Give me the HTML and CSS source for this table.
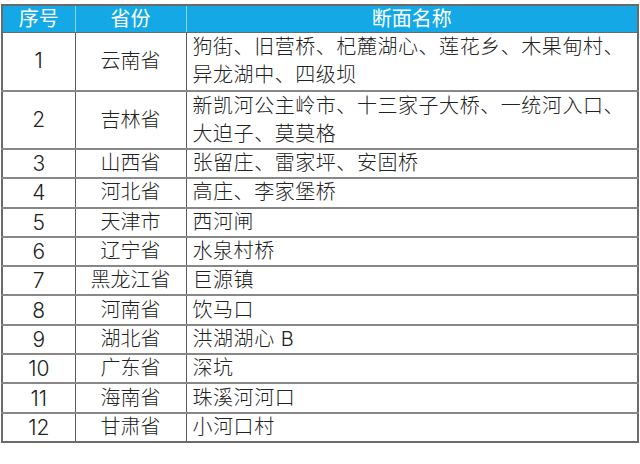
FILE: index.html
```html
<!DOCTYPE html>
<html lang="zh">
<head>
<meta charset="utf-8">
<link rel="stylesheet" href="styles.css">
</head>
<body>
<table class="sections">
  <colgroup>
    <col class="c-no">
    <col class="c-prov">
    <col class="c-name">
  </colgroup>
  <thead>
    <tr class="head"><th>序号</th><th>省份</th><th>断面名称</th></tr>
  </thead>
  <tbody>
    <tr class="tall"><td class="num">1</td><td class="prov">云南省</td><td class="name">狗街、旧营桥、杞麓湖心、莲花乡、木果甸村、<br>异龙湖中、四级坝</td></tr>
    <tr class="tall"><td class="num">2</td><td class="prov">吉林省</td><td class="name">新凯河公主岭市、十三家子大桥、一统河入口、<br>大迫子、莫莫格</td></tr>
    <tr><td class="num">3</td><td class="prov">山西省</td><td class="name">张留庄、雷家坪、安固桥</td></tr>
    <tr><td class="num">4</td><td class="prov">河北省</td><td class="name">高庄、李家堡桥</td></tr>
    <tr><td class="num">5</td><td class="prov">天津市</td><td class="name">西河闸</td></tr>
    <tr><td class="num">6</td><td class="prov">辽宁省</td><td class="name">水泉村桥</td></tr>
    <tr><td class="num">7</td><td class="prov">黑龙江省</td><td class="name">巨源镇</td></tr>
    <tr><td class="num">8</td><td class="prov">河南省</td><td class="name">饮马口</td></tr>
    <tr><td class="num">9</td><td class="prov">湖北省</td><td class="name">洪湖湖心 B</td></tr>
    <tr><td class="num">10</td><td class="prov">广东省</td><td class="name">深坑</td></tr>
    <tr><td class="num">11</td><td class="prov">海南省</td><td class="name">珠溪河河口</td></tr>
    <tr><td class="num">12</td><td class="prov">甘肃省</td><td class="name">小河口村</td></tr>
  </tbody>
</table>
</body>
</html>
```

FILE: styles.css
```css
html, body {
  margin: 0;
  padding: 0;
  background: #ffffff;
}
body {
  padding: 4px 0 0 1px;
  font-family: "Inter", "Noto Sans CJK SC", sans-serif;
  font-weight: 300;
  color: #222222;
}
.sections {
  border-collapse: collapse;
  table-layout: fixed;
  width: 636px;
  border: 2px solid #6a6a6a;
}
.c-no { width: 73px; }
.c-prov { width: 111px; }
.c-name { width: 452px; }
.head th {
  background: #14a9e6;
  color: #ffffff;
  font-weight: 400;
  font-size: 20px;
  height: 26px;
  padding: 0;
  line-height: 26px;
  text-align: center;
  border-left: 1px solid #8fd3f2;
  border-bottom: 1px solid #6a6a6a;
}
.head th:first-child { border-left: none; }
td {
  font-size: 20px;
  line-height: 27px;
  height: 27.3px;
  padding: 0;
  border-top: 2px solid #888888;
  border-left: 1px solid #5a5a5a;
  vertical-align: middle;
}
tbody tr:first-child td { border-top: 1px solid #6a6a6a; }
.tall td {
  height: 56.5px;
  line-height: 28px;
}
.num, .prov { text-align: center; }
.num { font-size: 21px; }
.name {
  text-align: left;
  padding-left: 6px;
  letter-spacing: 0.55px;
}
```
